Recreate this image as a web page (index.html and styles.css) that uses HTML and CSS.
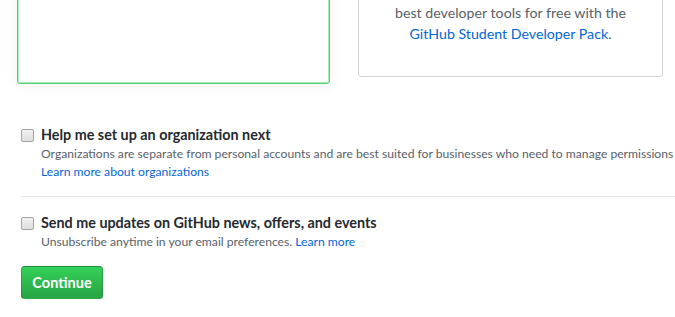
FILE: index.html
```html
<!DOCTYPE html>
<html>
<head>
<meta charset="utf-8">
<link rel="stylesheet" href="styles.css">
</head>
<body>
<div class="page">
  <div class="plans">
    <div class="plan plan-selected"></div>
    <div class="plan plan-student">
      <p class="student-text">best developer tools for free with the<br><a href="#" class="link">GitHub Student Developer Pack</a>.</p>
    </div>
  </div>
  <div class="options">
    <div class="option">
      <input type="checkbox" class="checkbox">
      <div class="option-body">
        <div class="option-label">Help me set up an organization next</div>
        <div class="note">Organizations are separate from personal accounts and are best suited for businesses who need to manage permissions</div>
        <div class="note"><a href="#" class="link">Learn more about organizations</a></div>
      </div>
    </div>
    <hr class="divider">
    <div class="option">
      <input type="checkbox" class="checkbox">
      <div class="option-body">
        <div class="option-label">Send me updates on GitHub news, offers, and events</div>
        <div class="note">Unsubscribe anytime in your email preferences. <a href="#" class="link">Learn more</a></div>
      </div>
    </div>
    <button class="btn-primary">Continue</button>
  </div>
</div>
</body>
</html>
```

FILE: styles.css
```css
html, body {
  margin: 0;
  padding: 0;
  background: #fff;
  overflow: hidden;
}
body {
  font-family: "Lato", "Open Sans", sans-serif;
  font-size: 14px;
  color: #24292e;
}
.page {
  width: 675px;
  height: 317px;
  overflow: hidden;
}
.plans {
  display: flex;
  align-items: flex-start;
  margin-top: -99px;
  padding-left: 17px;
  gap: 28px;
}
.plan {
  box-sizing: border-box;
  border-radius: 3px;
  background: #fff;
}
.plan-selected {
  width: 313px;
  height: 183px;
  border: 1px solid #4fd46f;
  box-shadow: inset 0 0 0 1px #a6ebb5, 0 1px 14px rgba(27, 31, 35, 0.07);
}
.plan-student {
  width: 305px;
  height: 176px;
  border: 1px solid #d1d5da;
  display: flex;
  flex-direction: column;
  justify-content: flex-end;
  padding-bottom: 32px;
}
.student-text {
  margin: 0;
  text-align: center;
  color: #586069;
  font-size: 14.2px;
  line-height: 21px;
}
.link {
  color: #0366d6;
  text-decoration: none;
}
.options {
  margin-top: 41px;
  margin-left: 21px;
  width: 680px;
}
.option {
  display: flex;
  gap: 7px;
  align-items: flex-start;
}
.checkbox {
  appearance: none;
  -webkit-appearance: none;
  box-sizing: border-box;
  width: 13px;
  height: 13px;
  margin: 4px 0 0 0;
  border: 1px solid #a3a3a3;
  border-radius: 2px;
  background: linear-gradient(#f2f2f2, #dedede);
  flex: none;
}
.option-body {
  display: flex;
  flex-direction: column;
}
.option-label {
  font-weight: 700;
  font-size: 14.35px;
  line-height: 20px;
  white-space: nowrap;
}
.note {
  font-size: 12.15px;
  line-height: 18px;
  color: #586069;
  white-space: nowrap;
}
.divider {
  margin: 15px 0 16px 0;
  border: 0;
  border-top: 1px solid #e1e4e8;
  height: 0;
}
.btn-primary {
  margin-top: 15px;
  box-sizing: border-box;
  height: 33px;
  width: 82px;
  padding: 0;
  font-family: inherit;
  font-size: 14.5px;
  font-weight: 700;
  color: #fff;
  background: linear-gradient(180deg, #34d058 0%, #28a745 90%);
  border: 1px solid rgba(27, 31, 35, 0.2);
  border-radius: 3.5px;
  cursor: pointer;
}
```
